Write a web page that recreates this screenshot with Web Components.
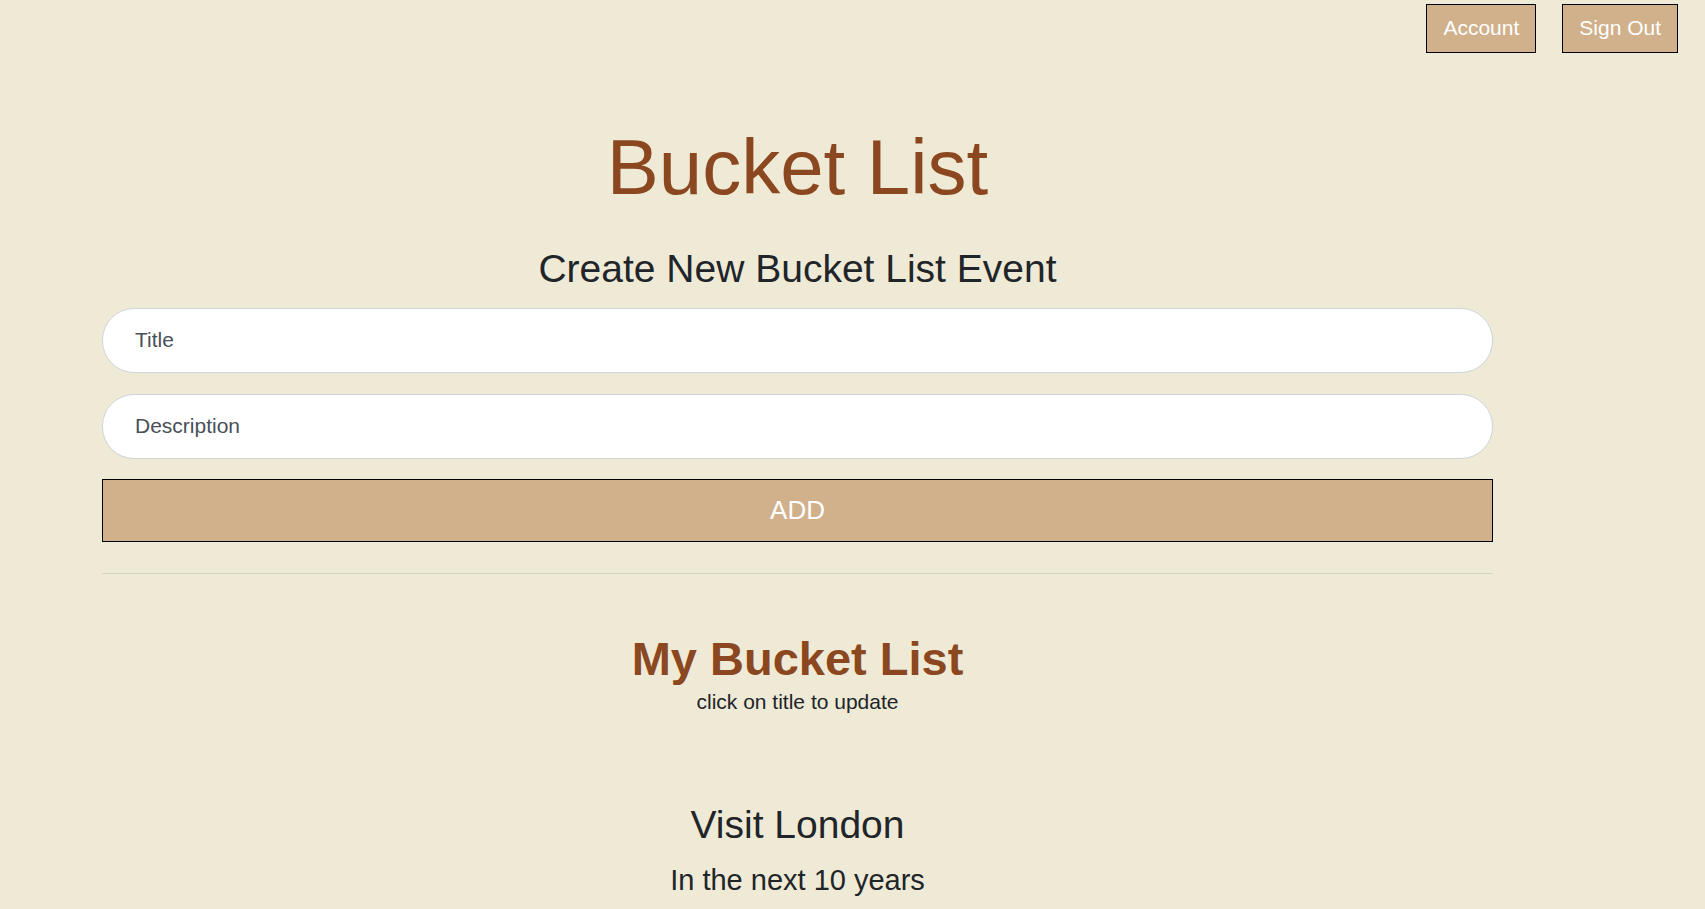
<!DOCTYPE html>
<html lang="en">
<head>
<meta charset="utf-8">
<title>Bucket List</title>
<style>
body{margin:0;background:#efead6;color:#212529;font:21px/31px "Liberation Sans",Arial,sans-serif}
</style>
</head>
<body>
<bucket-page></bucket-page>
<script>
const define = (name, html) => customElements.define(name, class extends HTMLElement {
  constructor() {
    super();
    this.attachShadow({ mode: 'open' }).innerHTML = html;
  }
});

define('nav-button', `<style>
:host{display:block}
button{display:block;font:inherit;color:#fff;background:#d0b18b;border:1px solid #000;padding:7px 16px 9px;margin:0;cursor:pointer}
</style><button type="button"><slot></slot></button>`);

define('top-nav', `<style>
:host{display:block}
nav{display:flex;justify-content:flex-end;gap:26px;padding:4px 27px 0}
</style><nav><nav-button>Account</nav-button><nav-button>Sign Out</nav-button></nav>`);

customElements.define('pill-field', class extends HTMLElement {
  connectedCallback() {
    const label = this.getAttribute('label');
    this.attachShadow({ mode: 'open' }).innerHTML = `<style>
:host{display:block}
input{display:block;box-sizing:border-box;width:100%;height:65px;font:inherit;color:#495057;background:#fff;border:1px solid #ced4da;border-radius:32px;padding:0 32px 2px}
input::placeholder{color:#495057;opacity:1}
</style><input type="text" aria-label="${label}" placeholder="${label}">`;
  }
});

define('event-form', `<style>
:host{display:block}
h2{margin:0 0 16px;font-size:39px;line-height:47px;font-weight:400;text-align:center}
form{display:flex;flex-direction:column}
pill-field{margin-bottom:21px}
pill-field:last-of-type{margin-bottom:20px}
button{font-family:inherit;font-size:26px;line-height:37px;color:#fff;background:#d0b18b;border:1px solid #000;padding:12px 20px;margin:0;cursor:pointer}
</style><h2>Create New Bucket List Event</h2>
<form><pill-field label="Title"></pill-field><pill-field label="Description"></pill-field><button type="button">ADD</button></form>`);

define('bucket-item', `<style>
:host{display:block;text-align:center}
h2{margin:0 0 15px;font-size:39px;line-height:47px;font-weight:400}
h4{margin:0;font-size:29px;line-height:35px;font-weight:400}
</style><h2><slot name="title"></slot></h2><h4><slot></slot></h4>`);

define('bucket-page', `<style>
:host{display:block}
main{margin:0 212px 0 102px;text-align:center}
h1{margin:67px 0 31px;font-size:78px;line-height:94px;font-weight:400;color:#8b4720}
hr{margin:31px 0 57px;border:0;border-top:1px solid rgba(0,0,0,.1)}
h3{margin:0;font-size:47px;line-height:55px;color:#8b4720}
p{margin:0 0 84px}
</style><top-nav></top-nav>
<main><h1>Bucket List</h1><event-form></event-form><hr>
<h3>My Bucket List</h3><p>click on title to update</p>
<bucket-item><span slot="title">Visit London</span>In the next 10 years</bucket-item></main>`);
</script>
</body>
</html>
